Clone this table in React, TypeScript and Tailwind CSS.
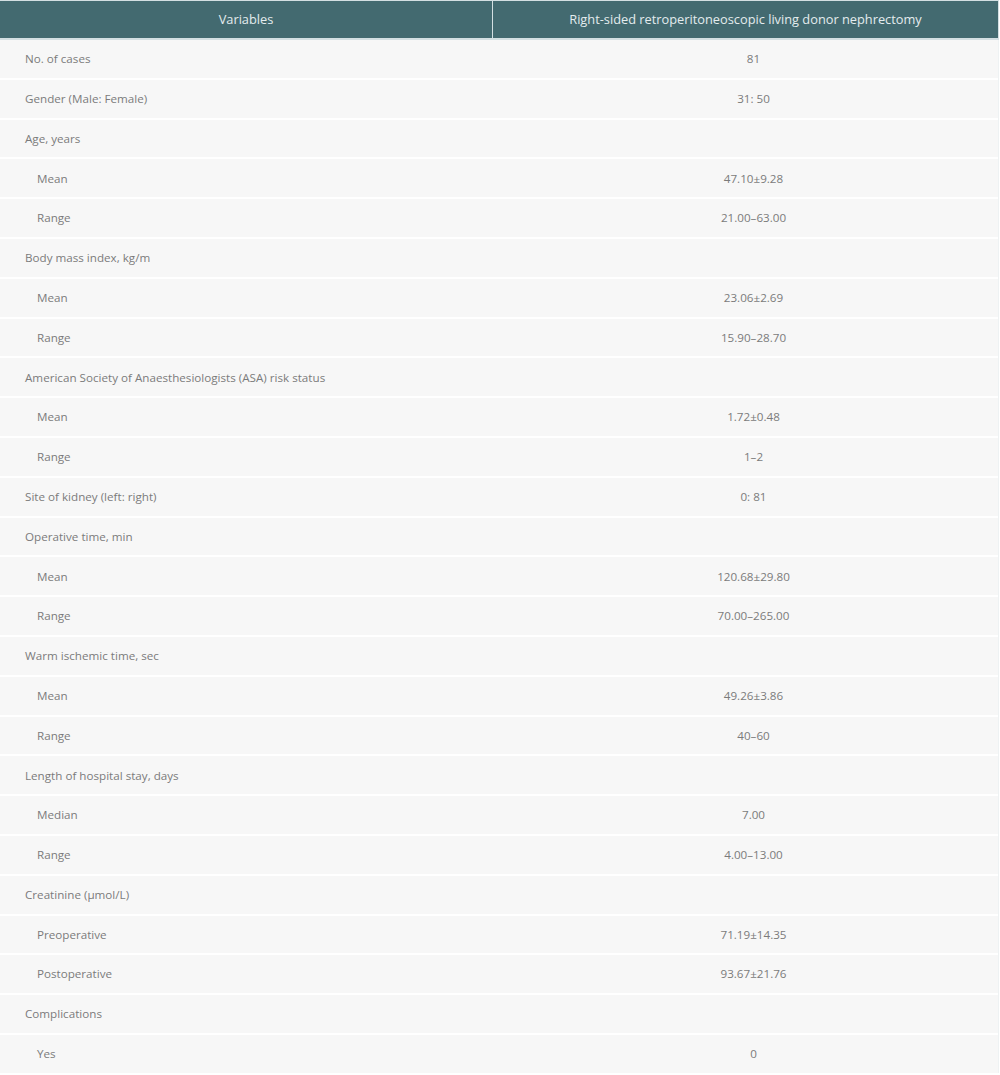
import React from "react";

type Row = { label: string; value?: string; sub?: boolean };

const rows: Row[] = [
  { label: "No. of cases", value: "81" },
  { label: "Gender (Male: Female)", value: "31: 50" },
  { label: "Age, years" },
  { label: "Mean", value: "47.10±9.28", sub: true },
  { label: "Range", value: "21.00–63.00", sub: true },
  { label: "Body mass index, kg/m" },
  { label: "Mean", value: "23.06±2.69", sub: true },
  { label: "Range", value: "15.90–28.70", sub: true },
  { label: "American Society of Anaesthesiologists (ASA) risk status" },
  { label: "Mean", value: "1.72±0.48", sub: true },
  { label: "Range", value: "1–2", sub: true },
  { label: "Site of kidney (left: right)", value: "0: 81" },
  { label: "Operative time, min" },
  { label: "Mean", value: "120.68±29.80", sub: true },
  { label: "Range", value: "70.00–265.00", sub: true },
  { label: "Warm ischemic time, sec" },
  { label: "Mean", value: "49.26±3.86", sub: true },
  { label: "Range", value: "40–60", sub: true },
  { label: "Length of hospital stay, days" },
  { label: "Median", value: "7.00", sub: true },
  { label: "Range", value: "4.00–13.00", sub: true },
  { label: "Creatinine (μmol/L)" },
  { label: "Preoperative", value: "71.19±14.35", sub: true },
  { label: "Postoperative", value: "93.67±21.76", sub: true },
  { label: "Complications" },
  { label: "Yes", value: "0", sub: true },
];

export default function App() {
  return (
    <div className="w-[1000px] bg-white font-['Open_Sans',_'Liberation_Sans',_sans-serif]">
      <div className="w-[999px]">
        {/* header */}
        <div className="grid grid-cols-[493px_1fr] bg-[#436a70] border-t border-r border-b-2 border-[#d3dfe2] text-[#e4ecee] text-[12.8px]">
          <div className="h-[37px] flex items-center justify-center border-r border-[#d3dfe2]">
            Variables
          </div>
          <div className="h-[37px] flex items-center justify-center">
            Right-sided retroperitoneoscopic living donor nephrectomy
          </div>
        </div>

        {/* body */}
        <div className="flex flex-col gap-[2px] text-[#7b7b7b] text-[11.65px] border-r border-[#eef2f3]">
          {rows.map((r, i) => (
            <div key={i} className="grid grid-cols-[493px_1fr] h-[37.8px] bg-[#f7f7f7]">
              <div className={`flex items-center ${r.sub ? "pl-[37px]" : "pl-[25px]"}`}>
                {r.label}
              </div>
              <div className="flex items-center justify-center pl-[16px]">
                {r.value ?? ""}
              </div>
            </div>
          ))}
        </div>
      </div>
    </div>
  );
}
